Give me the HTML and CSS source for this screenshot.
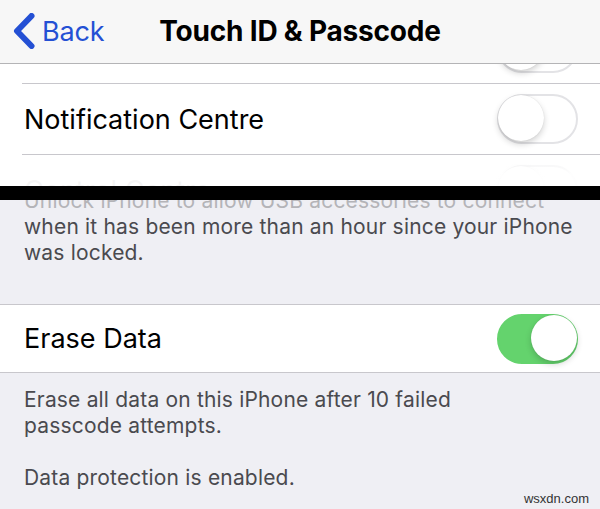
FILE: index.html
```html
<!DOCTYPE html>
<html>
<head>
<meta charset="utf-8">
<link rel="stylesheet" href="styles.css">
</head>
<body>
<header class="nav">
  <a class="back">
    <svg class="chev" width="24" height="36" viewBox="0 0 24 36"><path d="M19.5 3 L5 18 L19.5 33" fill="none" stroke="#2450d4" stroke-width="6" stroke-linecap="round" stroke-linejoin="round"/></svg>
    <span>Back</span>
  </a>
  <h1 class="title">Touch ID &amp; Passcode</h1>
  <span></span>
</header>

<section class="top">
  <div class="list shifted">
    <div class="row">
      <span class="label">Today View</span>
      <span class="toggle"></span>
    </div>
    <div class="row">
      <span class="label">Notification Centre</span>
      <span class="toggle"></span>
    </div>
    <div class="row">
      <span class="label">Control Centre</span>
      <span class="toggle"></span>
    </div>
  </div>
  <div class="fade"></div>
</section>

<div class="blackbar"></div>

<section class="bottom">
  <div class="clip">
    <p class="foot first"><span class="faded">Unlock iPhone to allow USB accessories to connect</span><br>when it has been more than an hour since your iPhone<br>was locked.</p>
  </div>
  <div class="list group">
    <div class="row last">
      <span class="label">Erase Data</span>
      <span class="toggle on"></span>
    </div>
  </div>
  <p class="foot">Erase all data on this iPhone after 10 failed<br>passcode attempts.</p>
  <p class="foot">Data protection is enabled.</p>
  <div class="mark">wsxdn.com</div>
</section>
</body>
</html>
```

FILE: styles.css
```css
* { box-sizing: border-box; }
html, body { margin: 0; padding: 0; }
body {
  width: 600px;
  height: 509px;
  overflow: hidden;
  background: #efeff4;
  font-family: Inter, "Liberation Sans", sans-serif;
  -webkit-font-smoothing: antialiased;
}

.nav {
  height: 64px;
  background: #f7f7f7;
  border-bottom: 1px solid #b4b4b6;
  display: grid;
  grid-template-columns: 1fr auto 1fr;
  align-items: center;
  position: relative;
  z-index: 2;
}
.back {
  display: flex;
  align-items: center;
  gap: 6px;
  padding-left: 12px;
  color: #2450d4;
  font-size: 27px;
  letter-spacing: -0.2px;
  margin-top: -1px;
}
.chev { display: block; }
.title {
  margin: 0;
  font-size: 28px;
  font-weight: 700;
  letter-spacing: -0.2px;
  color: #000;
  margin-top: -2px;
}

.top {
  height: 122px;
  background: #fff;
  overflow: hidden;
  position: relative;
}
.shifted { margin-top: -51px; }
.fade {
  position: absolute;
  left: 0; right: 0; bottom: 0;
  height: 30px;
  background: linear-gradient(to bottom, rgba(255,255,255,0.5), rgba(255,255,255,0.96) 60%);
}

.list { background: #fff; }
.row {
  height: 71px;
  margin-left: 22px;
  padding-right: 22px;
  border-bottom: 1px solid #c8c7cc;
  display: flex;
  align-items: center;
  justify-content: space-between;
}
.label {
  font-size: 27px;
  color: #000;
  letter-spacing: 0;
  padding-left: 2px;
}
.toggle {
  width: 81px;
  height: 50px;
  border-radius: 25px;
  border: 2px solid #e3e3e6;
  background: #fff;
  position: relative;
}
.toggle::after {
  content: "";
  position: absolute;
  top: -1px; left: -1px;
  width: 46px; height: 46px;
  border-radius: 50%;
  background: #fff;
  box-shadow: 0 3px 6px rgba(0,0,0,0.18), 0 0 1px rgba(0,0,0,0.15);
}
.toggle.on {
  background: #64d36d;
  border-color: #64d36d;
}
.toggle.on::after {
  left: auto; right: -1px;
}

.blackbar { height: 14px; background: #000; }

.bottom { position: relative; height: 309px; }
.clip {
  height: 104px;
  overflow: hidden;
}
.foot {
  margin: 0;
  padding: 0 24px;
  font-size: 21px;
  line-height: 26px;
  color: #4a4a4f;
  letter-spacing: 0.18px;
}
.first { margin-top: -12px; }
.faded { color: #b4b4b8; }

.group {
  border-top: 1px solid #c8c7cc;
  border-bottom: 1px solid #c8c7cc;
}
.row.last { border-bottom: 0; margin-left: 0; padding-left: 22px; height: 67px; }

.group + .foot { margin-top: 14px; }
.foot + .foot { margin-top: 26px; }

.mark {
  position: absolute;
  right: 11px;
  bottom: 3px;
  font-family: "Liberation Sans", sans-serif;
  font-size: 13px;
  color: #333;
}
```
